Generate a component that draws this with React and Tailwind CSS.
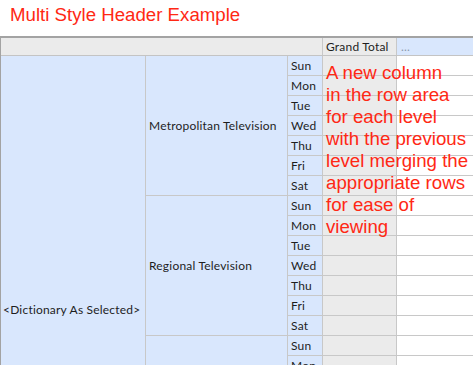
const days = ["Sun", "Mon", "Tue", "Wed", "Thu", "Fri", "Sat"];
const groups = ["Metropolitan Television", "Regional Television", ""];

const cellFont = { fontFamily: "Lato, 'Open Sans', sans-serif" };
const redFont = { fontFamily: "'Liberation Sans', Arial, sans-serif" };

const DayRow = ({ day }) => (
  <div className="flex h-[20px] border-b border-[#c8c8c8]">
    <div className="w-[35px] flex items-center px-[3px] bg-[#d9e7fd] border-r border-[#c8c8c8]">
      {day}
    </div>
    <div className="w-[74px] bg-[#ebebeb] border-r border-[#c8c8c8]" />
    <div className="flex-1 bg-white" />
  </div>
);

const Group = ({ name }) => (
  <div className="flex h-[140px]">
    <div className="w-[142px] flex items-center px-[3px] bg-[#d9e7fd] border-r border-b border-[#c8c8c8]">
      {name}
    </div>
    <div className="flex-1 flex flex-col">
      {days.map((d) => (
        <DayRow key={d} day={d} />
      ))}
    </div>
  </div>
);

export default function App() {
  return (
    <div className="relative w-[473px] h-[365px] overflow-hidden bg-white">
      <h1 className="h-[36px] pt-[4px] pl-[10px] text-[18.67px] leading-[21px] text-[#ff2814]" style={redFont}>
        Multi Style Header Example
      </h1>

      <div
        className="border-t-2 border-l border-[#a3a3a3] text-[12px] leading-[16px] tracking-[0.2px] text-[#1e1e1e]"
        style={cellFont}
      >
        <div className="flex h-[18px] border-b border-[#c4c4c4]">
          <div className="w-[322px] bg-[#ebebeb] border-r border-[#c8c8c8]" />
          <div className="w-[74px] flex items-center px-[3px] bg-[#ebebeb] border-r border-[#c8c8c8]">
            Grand Total
          </div>
          <div className="flex-1 flex items-center px-[4px] bg-[#d9e7fd] text-[#8a99ad]">...</div>
        </div>

        <div className="flex">
          <div className="w-[145px] h-[508px] flex items-center px-[2px] bg-[#d9e7fd] border-r border-[#c8c8c8]">
            &lt;Dictionary As Selected&gt;
          </div>
          <div className="flex-1 flex flex-col">
            {groups.map((g, i) => (
              <Group key={i} name={g} />
            ))}
          </div>
        </div>
      </div>

      <p className="absolute left-[326px] top-[62px] text-[18.67px] leading-[22px] text-[#ff2814]" style={redFont}>
        A new column
        <br />
        in the row area
        <br />
        for each level
        <br />
        with the previous
        <br />
        level merging the
        <br />
        appropriate rows
        <br />
        for ease of
        <br />
        viewing
      </p>
    </div>
  );
}
